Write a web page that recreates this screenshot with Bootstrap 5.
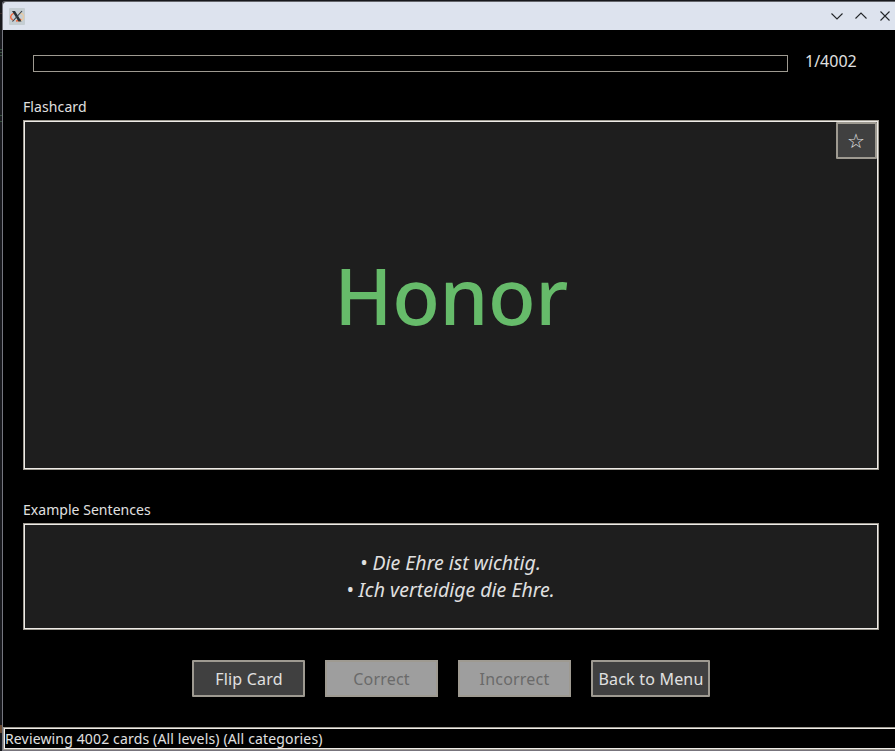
<!DOCTYPE html>
<html lang="en">
<head>
<meta charset="utf-8">
<meta name="viewport" content="width=device-width, initial-scale=1">
<title>Flashcards</title>
<link rel="stylesheet" href="https://cdn.jsdelivr.net/npm/bootstrap@5.3.0/dist/css/bootstrap.min.css">
<style>
html,body{height:100%}
body{background:#17181c;font-family:"Noto Sans",sans-serif;color:#e0e0e0;overflow:hidden}
.app-window{width:895px;height:751px;padding:1px 0 0 2px;background:linear-gradient(#3a2a28,#3a2a28) 0 13px/2px 1px no-repeat,linear-gradient(#35503c,#35503c) 0 49px/2px 1px no-repeat,linear-gradient(#35503c,#35503c) 0 52px/2px 1px no-repeat,linear-gradient(#35503c,#35503c) 0 55px/2px 1px no-repeat,linear-gradient(#35503c,#35503c) 0 115px/2px 1px no-repeat,linear-gradient(#35503c,#35503c) 0 121px/2px 1px no-repeat,linear-gradient(#6b4a30,#6b4a30) 0 725px/2px 8px no-repeat,#17181c}
.frame{height:750px;border-left:1px solid #75767f;border-top:1px solid #64666b;border-top-left-radius:3px;background:#000}
.titlebar{height:28px;flex:none;background:#dde3ee;padding:0 2px 0 6px;border-top-left-radius:3px}
.win-controls{gap:8px}
.content{padding:25px 16px 0 20px}
.meter{width:755px;height:17px;margin-left:10px;border:1px solid #9e9a91;border-radius:0;background:#000}
.count{font-size:16px;line-height:22px;margin:-5px 0 0 17px}
.caption{font-size:14px;line-height:20px;height:23px;margin-top:25px;letter-spacing:.1px}
.caption-examples{margin-top:30px;letter-spacing:.04px}
.panel{background:#1e1e1e;border:1px solid #9e9a91;box-shadow:inset 0 0 0 1px #eeebe7}
.panel-word{height:350px}
.panel-text{height:107px;font-size:19.5px;line-height:27px;font-style:italic;padding:0 1px 2px 0}
.word{font-size:78px;line-height:108px;font-weight:500;letter-spacing:-.4px;color:#66bb6a}
.key{height:37px;padding:0 0 0 1px;font-size:16px;line-height:22px;letter-spacing:.2px;color:#e0e0e0;background:#404040;border:2px solid #9e9a91;border-radius:1px}
.key:disabled{opacity:1;background:#9e9e9e;color:#6a6a6a;border-color:#9e9a91;border-radius:0;padding:0}
.key-md{width:113px}.key-lg{width:119px}
.star{width:41px;top:1px;right:1px;font-size:20px;padding:0}
.actions{gap:20px;margin:30px 0 0 169px}
.statusbar{height:23px;margin-right:-2px;border:1px solid #9e9a91;box-shadow:inset 0 0 0 1px #eeebe7;font-size:14px;line-height:22px;letter-spacing:.15px;padding-left:1px}
.bottom-edge{height:1px;background:#77747c}
</style>
</head>
<body>
<div class="app-window">
<div class="frame d-flex flex-column">
  <header class="titlebar d-flex align-items-center justify-content-between">
    <svg width="16" height="17" viewBox="0 0 16 17"><rect width="16" height="17" rx="1" fill="#c5ced3"/><path d="M10 5c4 .5 5 2 4.500 4.500S11 13 9 13" fill="none" stroke="#e8cba6" stroke-width="1.3"/><path d="M5 5.200C1 7 .5 10.500 4 12M7 13c3 0 4-.7 5-2" fill="none" stroke="#f06b40" stroke-width="1.400"/><path d="M3 3h3l6.500 10.500h-3z" fill="#283035"/><path d="M13 3L3.500 13.500" stroke="#384147" stroke-width="1.1"/></svg>
    <div class="win-controls d-flex">
      <svg width="16" height="16" fill="none" stroke="#232629" stroke-width="1.1"><path d="M2.500 5.500l5.500 5.500 5.500-5.500"/></svg>
      <svg width="16" height="16" fill="none" stroke="#232629" stroke-width="1.1"><path d="M2.500 10.500L8 5l5.500 5.500"/></svg>
      <svg width="16" height="16" fill="none" stroke="#232629" stroke-width="1.1"><path d="M3.500 3.500l9 9M12.500 3.500l-9 9"/></svg>
    </div>
  </header>
  <main class="content flex-grow-1">
    <div class="d-flex">
      <div class="progress meter"></div>
      <div class="count">1/4002</div>
    </div>
    <div class="caption">Flashcard</div>
    <section class="panel panel-word position-relative d-flex align-items-center justify-content-center">
      <div class="word">Honor</div>
      <button class="btn key star position-absolute">☆</button>
    </section>
    <div class="caption caption-examples">Example Sentences</div>
    <section class="panel panel-text d-flex flex-column justify-content-center text-center">
      <div>• Die Ehre ist wichtig.</div>
      <div>• Ich verteidige die Ehre.</div>
    </section>
    <div class="actions d-flex">
      <button class="btn key key-md">Flip Card</button>
      <button class="btn key key-md" disabled>Correct</button>
      <button class="btn key key-md" disabled>Incorrect</button>
      <button class="btn key key-lg">Back to Menu</button>
    </div>
  </main>
  <footer class="statusbar">Reviewing 4002 cards (All levels) (All categories)</footer>
  <div class="bottom-edge"></div>
</div>
</div>
<script src="https://cdn.jsdelivr.net/npm/bootstrap@5.3.0/dist/js/bootstrap.bundle.min.js"></script>
</body>
</html>
